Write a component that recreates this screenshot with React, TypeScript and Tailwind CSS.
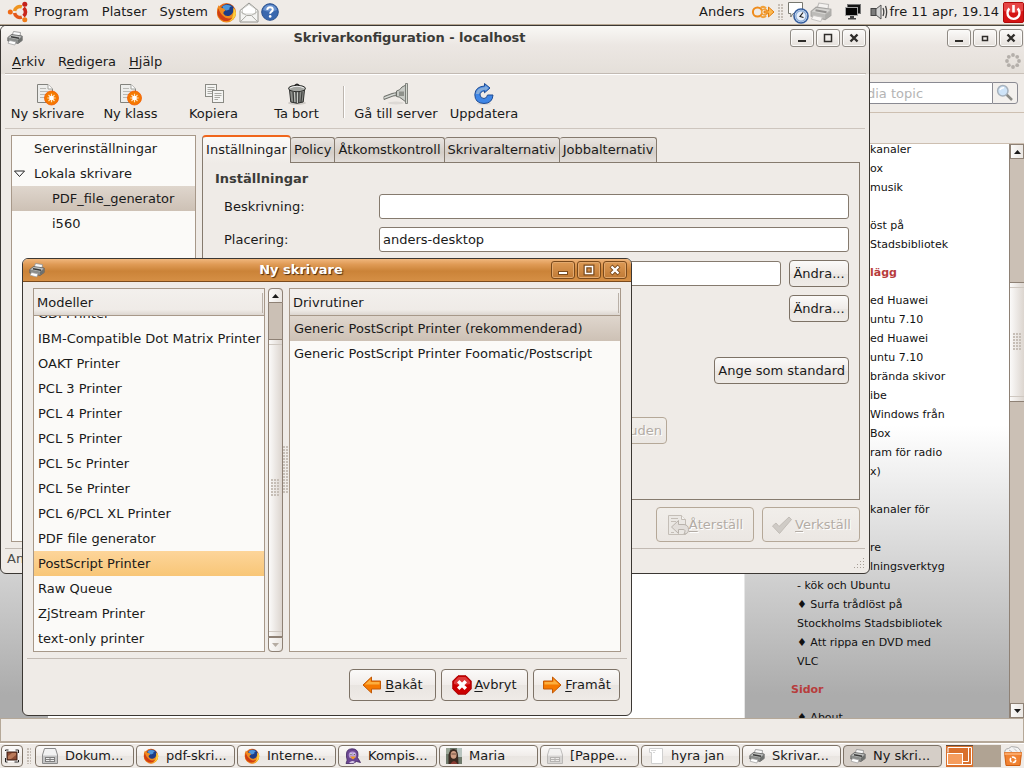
import { useState } from "react";
import type { ReactNode } from "react";

const FONT = "font-['DejaVu_Sans',sans-serif]";
const BTN =
  "border border-[#7d7266] rounded-[4px] bg-[linear-gradient(#fbfaf9,#f0ece9_50%,#e9e5e1_51%,#efebe7)] text-[#1a1a1a]";
const BTN_OFF =
  "border border-[#b5a898] rounded-[4px] bg-[linear-gradient(#f1eeea,#ebe7e3)] text-[#b3aca5] [text-shadow:1px_1px_0_#fff]";

/* ---------- icons ---------- */

function PrinterIcon({ size = 16, faded = false }: { size?: number; faded?: boolean }) {
  return (
    <svg width={size} height={size} viewBox="0 0 16 16" opacity={faded ? 0.5 : 1} className="shrink-0">
      <path d="M5 5.500 L6.500 1.500 L13.500 2.500 L13 7Z" fill="#fafafa" stroke="#8e8e8e" strokeWidth=".8" />
      <path d="M.8 7.500 L4.500 4.500 L15.200 6 L15.200 10.500 L11 13.500 L.8 11Z" fill="#8b8d8b" stroke="#5f605f" strokeWidth=".8" />
      <path d="M1.300 7.600 L4.800 5 L14.600 6.400 L10.800 9.600Z" fill="#bfc1bf" />
      <path d="M4 6.800 L12 8.200" stroke="#3a3a3a" strokeWidth="1.500" />
      <path d="M11 10 L14.800 7.200 V10.300 L11 13Z" fill="#6d6f6d" />
      <path d="M2.500 10.500 L9 11.800 L7.800 15 L1 13.200Z" fill="#fff" stroke="#9a9a9a" strokeWidth=".7" />
    </svg>
  );
}

function UbuntuIcon() {
  return (
    <svg width="22" height="22" viewBox="0 0 22 22" className="shrink-0">
      <g fill="none" strokeWidth="3.6">
        <path d="M7.580 10.040 A5.500 5.500 0 0 1 14.880 5.830" stroke="#ef9420" />
        <path d="M16.540 6.790 A5.500 5.500 0 0 1 16.540 15.210" stroke="#c9261a" />
        <path d="M14.880 16.170 A5.500 5.500 0 0 1 7.580 11.960" stroke="#e4581a" />
      </g>
      <circle cx="3.300" cy="11" r="2.500" fill="#f06a14" />
      <circle cx="17.800" cy="3.200" r="2.500" fill="#c4201a" />
      <circle cx="17.800" cy="18.800" r="2.500" fill="#ef7c18" />
    </svg>
  );
}

function FirefoxIcon({ size = 20 }: { size?: number }) {
  return (
    <svg width={size} height={size} viewBox="0 0 20 20" className="shrink-0">
      <circle cx="10" cy="10" r="9" fill="#e8681a" />
      <circle cx="11" cy="8.6" r="6.8" fill="#1d3d86" />
      <path d="M6 4 Q10 1 15 4 Q12 5 13 7 Q10 9 7 7Z" fill="#4d96dc" />
      <path d="M2.4 3.2 Q3.6 5.6 6 5.8 Q8 6 9 8.2 Q6.6 9 7 11 Q9 14.5 13 13 Q17 11.5 16.6 5.5 Q19 8 19 10.6 A9 9 0 0 1 1 10.6 Q.7 6 2.4 3.2Z" fill="#f08a1e" />
      <path d="M16.6 5.5 Q19 8 19 10.6 Q18.4 16.4 12.5 18.6 Q17.6 14 16.6 5.5Z" fill="#fbd03c" />
      <path d="M2.2 6 Q4 12 9 15 Q13 16.6 16 14.5 Q12 19.4 7 17.8 Q1.6 15.6 1.2 10Z" fill="#cf3e14" />
    </svg>
  );
}

function MailIcon() {
  return (
    <svg width="20" height="21" viewBox="0 0 20 21" className="shrink-0">
      <path d="M1 8.5 L10 1 L19 8.5 V20 H1Z" fill="#f4f4f2" stroke="#94948f" />
      <path d="M3.5 7 L10 2.4 L16.5 7 V12 H3.5Z" fill="#fff" stroke="#c6c6c2" strokeWidth=".8" />
      <path d="M1.6 19.5 L7.6 13.5 H12.4 L18.4 19.5" fill="none" stroke="#a7a7a2" />
      <path d="M1.6 9.5 L7.6 13.5 M18.4 9.5 L12.4 13.5" stroke="#b5b5b0" />
    </svg>
  );
}

function HelpIcon() {
  return (
    <svg width="18" height="18" viewBox="0 0 18 18" className="shrink-0">
      <circle cx="9" cy="9" r="8.3" fill="#3a68ae" stroke="#27508f" />
      <path d="M2 7 A7.3 7.3 0 0 1 16 7 Q9 10 2 7Z" fill="#6a93cf" />
      <path d="M6.2 6.8 Q6.4 4.2 9 4.2 Q11.8 4.2 11.8 6.6 Q11.8 8.2 10 9 Q9.2 9.5 9.2 10.8" fill="none" stroke="#fff" strokeWidth="2" />
      <circle cx="9.2" cy="13.4" r="1.3" fill="#fff" />
    </svg>
  );
}

function SwitchUserIcon() {
  return (
    <svg width="24" height="18" viewBox="0 0 24 18" className="shrink-0" fill="none">
      <circle cx="6.500" cy="9" r="4.600" stroke="#ee8b1c" strokeWidth="2" />
      <path d="M9.500 5 Q12.500 2.500 15 5.500 M9.500 13 Q12.500 15.500 15 12.500" stroke="#f2a23c" strokeWidth="2" />
      <circle cx="13.500" cy="9" r="2.800" fill="#fff" stroke="#f2a23c" strokeWidth="1.600" />
      <path d="M13 8 H17.500 V4 L23 9 L17.500 14 V10 H13Z" fill="#fcb94f" stroke="#e27c10" />
    </svg>
  );
}

function ChatClockIcon() {
  return (
    <svg width="22" height="23" viewBox="0 0 22 23" className="shrink-0">
      <path d="M1.5 1.5 H15.5 V12.5 H6 L3.8 16 V12.5 H1.5Z" fill="#fff" stroke="#77776f" />
      <circle cx="14" cy="15" r="7" fill="#fff" stroke="#365f9f" strokeWidth="1.6" />
      <circle cx="14" cy="15" r="5.2" fill="#e9f0fa" stroke="#8badd9" strokeWidth="1.4" />
      <path d="M16 11.5 L13 15.5 L16.5 16.5" fill="none" stroke="#222" strokeWidth="1.2" />
    </svg>
  );
}

function NetworkIcon() {
  return (
    <svg width="18" height="18" viewBox="0 0 18 18" className="shrink-0">
      <rect x="3.5" y="1.5" width="13" height="9" fill="#161616" stroke="#777" />
      <rect x="1.5" y="4.5" width="12" height="8" fill="#060606" stroke="#a5a5a5" />
      <path d="M6 13 H10 V15 H12 V16.5 H4 V15 H6Z" fill="#454545" />
    </svg>
  );
}

function SpeakerIcon() {
  return (
    <svg width="18" height="16" viewBox="0 0 18 16" className="shrink-0">
      <rect x="1" y="4.5" width="5" height="7" fill="#7b7b7b" stroke="#444" />
      <path d="M6 5 L11 1 V15 L6 11Z" fill="#d5d5d5" stroke="#555" />
      <path d="M13 4 Q14.6 8 13 12 M15.5 2 Q17.8 8 15.5 14" fill="none" stroke="#444" strokeWidth="1.3" />
    </svg>
  );
}

function PowerIcon() {
  return (
    <svg width="21" height="21" viewBox="0 0 21 21" className="shrink-0">
      <rect x=".5" y=".5" width="20" height="20" rx="1.5" fill="#d41414" stroke="#b00c0c" />
      <path d="M1 1 H20 V9 Q10 12 1 9Z" fill="#e64545" />
      <path d="M6.4 6.5 A6 6 0 1 0 14.6 6.5" fill="none" stroke="#fff" strokeWidth="2.4" />
      <path d="M10.5 3 V10.5" stroke="#fff" strokeWidth="2.6" />
    </svg>
  );
}

function NewDocIcon() {
  return (
    <svg width="24" height="24" viewBox="0 0 24 24">
      <path d="M1.5 2.5 H12 L16.5 7 V20.5 H1.5Z" fill="#ededeb" stroke="#82827d" />
      <path d="M12 2.5 V7 H16.5" fill="#fff" stroke="#a2a29d" />
      <path d="M4 6.5 H10 M4 9.5 H12 M4 12.5 H10 M4 15.5 H9" stroke="#b9b9b5" />
      <circle cx="15.500" cy="16" r="7" fill="#f57900" stroke="#f25c05" strokeWidth=".8" />
      <path d="M15.500 11.800 V20.200 M11.300 16 H19.700 M12.500 13 L18.500 19 M18.500 13 L12.500 19" stroke="#ffe2bd" strokeWidth="1.200" />
      <circle cx="15.500" cy="16" r="2.300" fill="#fff" />
    </svg>
  );
}

function CopyIcon() {
  return (
    <svg width="24" height="24" viewBox="0 0 24 24">
      <rect x="3.500" y="2.500" width="11" height="12" fill="#f4f4f2" stroke="#8a8a84" />
      <path d="M5.500 5.500 H12.500 M5.500 7.500 H12.500 M5.500 9.500 H11 M5.500 11.500 H10" stroke="#a9a9a4" />
      <rect x="10.500" y="8.500" width="11" height="12" fill="#f4f4f2" stroke="#8a8a84" />
      <path d="M12.500 11.500 H19.500 M12.500 13.500 H19.500 M12.500 15.500 H18 M12.500 17.500 H16" stroke="#a9a9a4" />
    </svg>
  );
}

function TrashIcon() {
  return (
    <svg width="24" height="24" viewBox="0 0 24 24">
      <ellipse cx="12" cy="21" rx="9" ry="1.800" fill="#cfcbc6" />
      <path d="M4.500 8 H19.500 L18.200 20 Q12 22.500 5.800 20Z" fill="#8b8d89" stroke="#2f302e" />
      <path d="M8 10 L8.800 20 M11 10 V21 M14 10 L13.700 21 M17 10 L16 20" stroke="#3d3e3c" strokeWidth="1.2" />
      <path d="M9.500 10 L10 20 M12.500 10 V21" stroke="#d8dad6" strokeWidth=".8" />
      <ellipse cx="12" cy="6.500" rx="8.500" ry="3.200" fill="#a4a6a2" stroke="#2f302e" />
      <path d="M5 6 Q12 2.500 19 6" fill="none" stroke="#eee" />
      <path d="M10 3.500 Q12 1 14 3.500" fill="none" stroke="#222" strokeWidth="1.500" />
    </svg>
  );
}

function ServerIcon() {
  return (
    <svg width="26" height="24" viewBox="0 0 26 24">
      <ellipse cx="13" cy="21" rx="8" ry="1.500" fill="#ddd9d5" />
      <path d="M1 14.500 L9 11.500 L14 10.500 V13.500 L10 14 L1 17.500Z" fill="#b3b6b1" stroke="#646661" strokeWidth=".9" />
      <path d="M1 16 L12 12" stroke="#e9ebe7" strokeWidth=".8" />
      <path d="M13.500 9 Q17 8.500 19 5 L23 3 V20 L19 17 Q16.500 14.500 13.500 14.500Z" fill="#c7cac5" stroke="#6c6f69" />
      <path d="M16 9.500 H21 V14 H16Z" fill="#8e918b" />
      <path d="M22.500 1.500 H24.500 V21.500 H22.500Z" fill="#d3d7cf" stroke="#6c6f69" strokeWidth=".8" />
    </svg>
  );
}

function RefreshIcon() {
  return (
    <svg width="24" height="24" viewBox="0 0 24 24">
      <ellipse cx="12" cy="21.500" rx="7" ry="1.300" fill="#ddd9d5" />
      <path d="M12.500 1.500 L18 6 L12.500 10.800 V8.800 Q8 9.500 8 13 Q8.500 16.500 12 16.500 Q15 16.300 15.500 13 H21 Q20.500 21.300 12 21.500 Q2.800 21.300 2.800 12.500 Q3.500 4.500 12.500 4Z" fill="#3f86e6" stroke="#1f4b92" />
      <path d="M3.800 12 Q4.500 5.500 13.300 5 V3.500 L16.500 6 L13.500 8.800 V7.800 Q8 8 7 12Z" fill="#86acd9" />
    </svg>
  );
}

function ArrowIcon({ right = false }: { right?: boolean }) {
  return (
    <svg width="20" height="18" viewBox="0 0 20 18" className={right ? "-scale-x-100" : ""}>
      <path d="M1 9 L9.500 1 V5 H18.500 V13 H9.500 V17Z" fill="#f57900" stroke="#c35a06" />
      <path d="M2.800 8.600 L8.600 3.200 V6 H17.500 V8.600Z" fill="#fcaf3e" />
    </svg>
  );
}

function CancelIcon() {
  return (
    <svg width="20" height="20" viewBox="0 0 20 20">
      <path d="M6 .8 H14 L19.200 6 V14 L14 19.200 H6 L.8 14 V6Z" fill="#cc0000" stroke="#a80000" />
      <path d="M6.500 2 H13.500 L18 6.500 V9 Q10 11 2 9 V6.500Z" fill="#dd3b3b" />
      <path d="M6.200 6.200 L13.800 13.800 M13.800 6.200 L6.200 13.800" stroke="#fff" strokeWidth="3.400" />
    </svg>
  );
}

function RevertIcon() {
  return (
    <svg width="22" height="22" viewBox="0 0 22 22" fill="none" stroke="#c4beb7">
      <path d="M1.500 1.500 H14.500 L18.500 5.500 V20.500 H1.500Z" fill="#ebe8e4" />
      <path d="M14.500 1.500 V5.500 H18.500" fill="#f5f3f0" />
      <path d="M4 4.500 H11 M4 7.500 H9 M4 18.500 H7" />
      <path d="M4.500 13 L11.500 6.500 V10.500 H17 Q21.500 11 21.500 15.500 Q21.500 20 17 20 Q19.500 15.500 16 15.500 H11.500 V19.500Z" fill="#e2deda" stroke="#b9b3ac" />
    </svg>
  );
}

function ApplyIcon() {
  return (
    <svg width="22" height="20" viewBox="0 0 22 20">
      <path d="M1.500 11 L5 8 L8 11.500 L18 2 L20.500 4.500 L8.500 18.500Z" fill="#cfcbc6" stroke="#c2bdb7" />
    </svg>
  );
}

function SearchIcon() {
  return (
    <svg width="18" height="18" viewBox="0 0 18 18">
      <path d="M10.500 10.500 L16 16" stroke="#8b8b86" strokeWidth="2.500" />
      <circle cx="6.800" cy="6.800" r="5.200" fill="#cfe4f8" stroke="#a7b2bd" strokeWidth="1.500" />
      <path d="M4 6 Q5 3.500 8 3.800" fill="none" stroke="#fff" strokeWidth="1.400" />
    </svg>
  );
}

function ThrobberIcon() {
  return (
    <svg width="16" height="16" viewBox="0 0 16 16" fill="#b4afaa">
      <circle cx="8" cy="2" r="1.900" />
      <circle cx="12.200" cy="3.800" r="1.900" />
      <circle cx="14" cy="8" r="1.900" />
      <circle cx="12.200" cy="12.200" r="1.900" />
      <circle cx="8" cy="14" r="1.900" />
      <circle cx="3.800" cy="12.200" r="1.900" />
      <circle cx="2" cy="8" r="1.900" />
      <circle cx="3.800" cy="3.800" r="1.900" />
    </svg>
  );
}

function DrawerIcon({ faded = false }: { faded?: boolean }) {
  return (
    <svg width="16" height="16" viewBox="0 0 16 16" opacity={faded ? 0.5 : 1} className="shrink-0">
      <path d="M2.500 .5 H13.500 L15.500 7 V15.500 H.5 V7Z" fill="#f2f2f2" stroke="#8a8a8a" />
      <path d="M1 7.500 H15 V15 H1Z" fill="#c4c4c4" />
      <rect x="3" y="9" width="10" height="5" fill="#7f7f7f" />
      <path d="M4 10.500 H7.500 M8.500 10.500 H12 M4 12.500 H7.500 M8.500 12.500 H12" stroke="#eee" />
    </svg>
  );
}

function PidginIcon() {
  return (
    <svg width="16" height="16" viewBox="0 0 16 16" className="shrink-0">
      <path d="M1.500 6 Q1.500 1 7 .8 Q13 .8 13 6.500 Q13 8.500 12.500 9.500 L15.500 14.500 L11.500 13.500 L8 15.500 H1 Q3 12 1.500 9Z" fill="#6b4692" stroke="#3e2360" strokeWidth=".8" />
      <ellipse cx="7.500" cy="7" rx="3.800" ry="3.600" fill="#b79ad6" />
      <circle cx="6" cy="6.200" r="1" fill="#fff" />
      <circle cx="9.200" cy="6.200" r="1" fill="#fff" />
      <circle cx="6" cy="6.300" r=".6" fill="#111" />
      <circle cx="9.200" cy="6.300" r=".6" fill="#111" />
      <path d="M5 8.500 L11 8.500 L8 11.500Z" fill="#f29a1e" />
      <path d="M4 15 Q7 11.500 10 14 Q8 15.300 7 15.300Z" fill="#d9cbe8" />
    </svg>
  );
}

function AvatarIcon() {
  return (
    <svg width="16" height="16" viewBox="0 0 16 16" className="shrink-0">
      <rect width="16" height="16" fill="#6f7a6c" />
      <rect x="11" width="5" height="9" fill="#b8c4bf" />
      <rect width="4" height="6" fill="#9aa596" />
      <path d="M2.500 16 V7 Q3.500 1 7.500 1 Q11.500 1 12 7 L12.500 16Z" fill="#3b2a20" />
      <ellipse cx="7.600" cy="6.800" rx="3" ry="3.900" fill="#cf9d82" />
      <path d="M5.500 6 H10" stroke="#5c4034" strokeWidth=".8" />
      <path d="M4.500 16 Q8 10 11.500 16Z" fill="#8a3b32" />
    </svg>
  );
}

function PageIcon() {
  return (
    <svg width="16" height="16" viewBox="0 0 16 16" className="shrink-0">
      <path d="M1.500 .5 H14.500 V15.500 H3.500 V4.500 H1.500Z" fill="#fff" stroke="#cfcfcf" />
      <path d="M3 2.500 H8 M5 4.500 H7" stroke="#d8d8d8" />
    </svg>
  );
}

function DesktopIcon() {
  return (
    <svg width="16" height="16" viewBox="0 0 16 16">
      <rect x="1.500" y="2" width="13" height="12" fill="#fff" stroke="#222" strokeDasharray="3 7 3 0" />
      <rect x="3" y="4" width="10" height="8" fill="#8a4b33" stroke="#3b1d12" />
      <path d="M4 8 L8 5 L12 5 V7 L7 11 H4Z" fill="#b97a5a" />
    </svg>
  );
}

function BinIcon() {
  return (
    <svg width="20" height="22" viewBox="0 0 20 22" className="shrink-0">
      <path d="M2 8 Q1 4 5.500 3.500 Q8 .5 12 2 Q17 2 18 8Z" fill="#f3f3f3" stroke="#999" strokeWidth=".8" />
      <path d="M6 5 L9 7 M11 3.500 L14 6.500" stroke="#bbb" />
      <path d="M1.500 7.500 H18.500 L17 20.500 H3Z" fill="#f08232" stroke="#cf5e10" />
      <path d="M1.500 7.500 H18.500 V10 H1.500Z" fill="#fba766" />
      <circle cx="10" cy="14.800" r="2.700" fill="none" stroke="#fff" strokeWidth="1.600" strokeDasharray="4.500 1.150" />
    </svg>
  );
}

/* ---------- shared parts ---------- */

type Glyph = "min" | "max" | "restore" | "close";

function WindowButton({ kind, active = false }: { kind: Glyph; active?: boolean }) {
  const ink = active ? "#ffffff" : "#2f2d2a";
  const names = { min: "Minimera", max: "Maximera", restore: "Återställ storlek", close: "Stäng" };
  return (
    <button
      aria-label={names[kind]}
      className={
        active
          ? "flex h-[18px] w-6 items-center justify-center rounded-[3px] border border-[#7a4a1c] bg-[linear-gradient(#dd9a55,#c07a35)] shadow-[inset_0_0_0_1px_#e2a96e]"
          : "flex h-[18px] w-6 items-center justify-center rounded-[3px] border border-[#8f8a84] bg-[linear-gradient(#fbfaf9,#e6e1dc)] shadow-[inset_0_0_0_1px_#fbfaf8]"
      }
    >
      <svg width="12" height="12" viewBox="0 0 12 12" fill="none" stroke={ink} strokeWidth="2">
        {active && kind === "max" && <rect x="2.500" y="2.500" width="7" height="7" stroke="#7a4a1c" strokeWidth="4" />}
        {active && kind === "close" && <path d="M2 2 L10 10 M10 2 L2 10" stroke="#7a4a1c" strokeWidth="4" />}
        {active && kind === "min" && <path d="M1 9 H11" stroke="#7a4a1c" strokeWidth="4" />}
        {kind === "min" && <path d="M2 9 H10" />}
        {kind === "max" && <path d="M2.500 2.500 H9.500 V9.500 H2.500Z" strokeWidth="1.500" />}
        {kind === "restore" && <path d="M3.500 4.500 H8.500 V8.500 H3.500Z" strokeWidth="1.500" />}
        {kind === "close" && <path d="M2.500 2.500 L9.500 9.500 M9.500 2.500 L2.500 9.500" strokeWidth="2.400" />}
      </svg>
    </button>
  );
}

function Mnemonic({ text }: { text: string }) {
  return (
    <span>
      <span className="underline underline-offset-2">{text[0]}</span>
      {text.slice(1)}
    </span>
  );
}

function Dots({ className }: { className: string }) {
  return (
    <div
      className={`bg-[radial-gradient(circle_at_1px_1px,#c6beb6_1px,transparent_1px)] bg-[size:3px_3px] ${className}`}
    />
  );
}

function ScrollArrow({ down = false, off = false, rounded = "" }: { down?: boolean; off?: boolean; rounded?: string }) {
  return (
    <button
      aria-label={down ? "Rulla nedåt" : "Rulla uppåt"}
      className={`flex h-[15px] shrink-0 items-center justify-center border border-[#8e8175] bg-[linear-gradient(90deg,#fbfaf9,#eae6e2)] ${rounded}`}
    >
      <svg width="7" height="4" viewBox="0 0 7 4" fill={off ? "#b5aca3" : "#1a1a1a"}>
        {down ? <path d="M0 0 H7 L3.500 4Z" /> : <path d="M0 4 H7 L3.500 0Z" />}
      </svg>
    </button>
  );
}

function Thumb({ className }: { className: string }) {
  return (
    <div
      className={`flex flex-col items-center justify-between border-x border-y border-[#8e8175] bg-[linear-gradient(90deg,#fbfaf9,#dcd5cf)] ${className}`}
    >
      <div className="h-[5px] w-full border-b border-[#cfc8c1]" />
      <Dots className="h-[18px] w-[9px]" />
      <div className="h-[5px] w-full border-t border-[#cfc8c1]" />
    </div>
  );
}

/* ---------- top panel ---------- */

function TopPanel() {
  return (
    <header className="flex h-[25px] shrink-0 items-center border-b border-[#b5a692] bg-[#efebe7] pl-[7px]">
      <UbuntuIcon />
      <nav className="flex items-center gap-[13px] pl-[5px]">
        <button>Program</button>
        <button>Platser</button>
        <button>System</button>
      </nav>
      <div className="flex items-center gap-0.5 pl-2">
        <FirefoxIcon size={21} />
        <MailIcon />
        <HelpIcon />
      </div>
      <div className="ml-auto flex items-center">
        <button>Anders</button>
        <span className="pl-1.5">
          <SwitchUserIcon />
        </span>
        <Dots className="mx-[3px] h-4 w-1.5" />
        <ChatClockIcon />
        <span className="pl-px">
          <PrinterIcon size={22} faded />
        </span>
        <span className="pl-3">
          <NetworkIcon />
        </span>
        <span className="pl-2">
          <SpeakerIcon />
        </span>
        <time className="pl-0.5">fre 11 apr, 19.14</time>
        <span className="pl-1">
          <PowerIcon />
        </span>
      </div>
    </header>
  );
}

/* ---------- browser window ---------- */

type Line = { text: string; full?: boolean };

const postsA: Line[] = [
  { text: "kanaler" },
  { text: "ox" },
  { text: "musik" },
  { text: "" },
  { text: "öst på" },
  { text: "Stadsbibliotek" },
];

const postsB: Line[] = [
  { text: "ed Huawei" },
  { text: "untu 7.10" },
  { text: "ed Huawei" },
  { text: "untu 7.10" },
  { text: "brända skivor" },
  { text: "ibe" },
  { text: "Windows från" },
  { text: "Box" },
  { text: "ram för radio" },
  { text: "x)" },
  { text: "" },
  { text: "kanaler för" },
  { text: "" },
  { text: "re" },
  { text: "lningsverktyg" },
  { text: "- kök och Ubuntu", full: true },
  { text: "♦ Surfa trådlöst på", full: true },
  { text: "Stockholms Stadsbibliotek", full: true },
  { text: "♦ Att rippa en DVD med", full: true },
  { text: "VLC", full: true },
];

function Lines({ items }: { items: Line[] }) {
  return (
    <ul>
      {items.map((l, i) => (
        <li key={i} className={l.full ? "h-[19px] whitespace-nowrap pl-[52px]" : "h-[19px] whitespace-nowrap pl-[125px]"}>
          {l.text}
        </li>
      ))}
    </ul>
  );
}

function BrowserWindow() {
  return (
    <section className="absolute inset-0 flex flex-col border-t border-[#4a463f] bg-[#efebe7]">
      <div className="bg-[linear-gradient(#f9f8f5,#ece7e3_40%,#e4dfd9)]">
        <div className="flex h-[23px] items-center justify-end gap-0.5 pr-px">
          <WindowButton kind="min" />
          <WindowButton kind="restore" />
          <WindowButton kind="close" />
        </div>
        <div className="flex h-[25px] items-center justify-end border-b border-[#c8c0b8] pr-[3px]">
          <ThrobberIcon />
        </div>
      </div>
      <div className="flex h-[39px] shrink-0 items-center justify-end border-b border-[#cdbfb1] pr-1.5">
        <input
          aria-label="Sök"
          placeholder="dia topic"
          className="h-[22px] w-[146px] border border-r-0 border-[#8a8a92] bg-white pl-5 placeholder:text-[#b4b4b4]"
        />
        <button aria-label="Sök" className="flex h-[22px] w-[26px] items-center justify-center rounded-r-[3px] border border-[#8a8a92] bg-[#f3f0ed]">
          <SearchIcon />
        </button>
      </div>
      <div className="h-[31px] shrink-0 border-b border-[#cdbfb1]" />
      <div className="flex min-h-0 flex-1">
        <div className="flex min-w-0 flex-1 bg-[linear-gradient(#fff_49%,#acacac_96%)]">
          <div className="w-12" />
          <div className="flex-1 border-r border-[#e6e6e6] bg-white" />
          <aside className="w-[264px] overflow-hidden text-[11px] leading-[19px] text-[#111]">
            <div className="-mt-1 flex flex-col gap-[9px]">
              <Lines items={postsA} />
              <h2 className="pl-[125px] font-bold text-[#b73c3c]">lägg</h2>
              <Lines items={postsB} />
              <h2 className="pl-[46px] font-bold text-[#b73c3c]">Sidor</h2>
              <Lines items={[{ text: "♦ About", full: true }]} />
            </div>
          </aside>
        </div>
        <div className="flex w-[15px] flex-col border-l border-[#8e8175] bg-[#cbc0b5]">
          <ScrollArrow />
          <div className="basis-[123px] shrink-0" />
          <Thumb className="h-[120px] shrink-0 border-x-0" />
          <div className="flex-1" />
          <ScrollArrow down />
        </div>
      </div>
      <div className="h-[25px] shrink-0 border border-b-2 border-[#b5a898]" />
    </section>
  );
}

/* ---------- printer configuration window ---------- */

function ToolButton({ label, icon, wide = false }: { label: string; icon: ReactNode; wide?: boolean }) {
  return (
    <button className={wide ? "flex w-[88px] flex-col items-center" : "flex w-[83px] flex-col items-center"}>
      <span className="flex h-6 items-center">{icon}</span>
      <span className="whitespace-nowrap leading-4">{label}</span>
    </button>
  );
}

function Field({ id, label, value }: { id: string; label: string; value: string }) {
  const [text, setText] = useState(value);
  return (
    <div className="flex items-center">
      <label htmlFor={id} className="w-[155px] shrink-0">
        {label}
      </label>
      <input
        id={id}
        value={text}
        onChange={(e) => setText(e.target.value)}
        className="h-[25px] min-w-0 flex-1 rounded-[3px] border border-[#857a6e] bg-white pl-[3px]"
      />
    </div>
  );
}

function ConfigWindow() {
  const treeRow = "flex h-[25px] items-center";
  const tab =
    "mt-0.5 flex h-[25px] items-center whitespace-nowrap rounded-t-[3px] border border-l-0 border-b-0 border-[#857a6e] bg-[linear-gradient(#e9e5e1,#d5cec7_60%,#e3deda)] px-[3px]";
  return (
    <section className="absolute bottom-[169px] left-0 right-[154px] top-0 flex flex-col rounded-[6px] border border-[#3b3733] bg-[#efebe7]">
      <div className="rounded-t-[5px] bg-[linear-gradient(#f9f8f5,#ece7e3_40%,#e4dfd9)] pl-1 pr-[3px]">
        <div className="flex h-[23px] items-center gap-0.5">
          <span className="pl-0.5">
            <PrinterIcon />
          </span>
          <h1 className="flex-1 pl-1.5 text-center font-bold text-[#3b3b38]">Skrivarkonfiguration - localhost</h1>
          <WindowButton kind="min" />
          <WindowButton kind="max" />
          <WindowButton kind="close" />
        </div>
        <nav className="flex h-[25px] items-center gap-[13px] border-b border-[#c2bab3] pl-[7px] pt-0.5">
          <button>
            <Mnemonic text="Arkiv" />
          </button>
          <button>
            R<span className="underline underline-offset-2">e</span>digera
          </button>
          <button>
            <Mnemonic text="Hjälp" />
          </button>
        </nav>
      </div>
      <div className="mx-1 flex h-[55px] shrink-0 items-center border-b border-t border-b-[#cdc5be] border-t-white pl-px">
        <ToolButton label="Ny skrivare" icon={<NewDocIcon />} />
        <ToolButton label="Ny klass" icon={<NewDocIcon />} />
        <ToolButton label="Kopiera" icon={<CopyIcon />} />
        <ToolButton label="Ta bort" icon={<TrashIcon />} />
        <div className="mx-[5px] h-8 w-0.5 border-l border-r border-l-[#bdb6af] border-r-white" />
        <div className="flex pl-0.5">
          <ToolButton label="Gå till server" icon={<ServerIcon />} wide />
          <ToolButton label="Uppdatera" icon={<RefreshIcon />} wide />
        </div>
      </div>
      <div className="flex min-h-0 flex-1 gap-[6px] pb-1.5 pl-[10px] pr-[9px] pt-1.5">
        <ul className="w-[185px] shrink-0 border border-[#a79889] bg-[#fbfaf8]">
          <li className={`${treeRow} pl-[22px]`}>Serverinställningar</li>
          <li className={`${treeRow} gap-2 pl-px`}>
            <svg width="13" height="8" viewBox="0 0 13 8" fill="#fff" stroke="#222">
              <path d="M1.500 1 H11.500 L6.500 6.500Z" />
            </svg>
            Lokala skrivare
          </li>
          <li className={`${treeRow} bg-[linear-gradient(#dfd6cd,#cdc1b5)] pl-10`}>PDF_file_generator</li>
          <li className={`${treeRow} pl-10`}>i560</li>
        </ul>
        <div className="flex min-w-0 flex-1 flex-col">
          <div className="flex h-[27px] shrink-0">
            <button className="z-10 flex h-7 w-[89px] items-center justify-center rounded-t-[4px] border border-b-0 border-t-2 border-[#857a6e] border-t-[#f0661c] bg-[linear-gradient(#fbfaf8,#efebe7)]">
              Inställningar
            </button>
            <button className={tab}>Policy</button>
            <button className={tab}>Åtkomstkontroll</button>
            <button className={tab}>Skrivaralternativ</button>
            <button className={tab}>Jobbalternativ</button>
          </div>
          <div className="flex min-h-0 flex-1 flex-col border border-[#857a6e] pl-3 pr-[10px] pt-2">
            <h2 className="font-bold leading-4 text-[#3b3b38]">Inställningar</h2>
            <div className="flex flex-col pl-[9px] pt-[7px]">
              <div className="flex flex-col gap-2">
                <Field id="desc" label="Beskrivning:" value="" />
                <Field id="place" label="Placering:" value="anders-desktop" />
                <div className="flex items-center gap-2">
                  <input
                    aria-label="Enhets-URI"
                    className="ml-[155px] h-[25px] min-w-0 flex-1 rounded-[3px] border border-[#857a6e] bg-white"
                  />
                  <button className={`${BTN} h-[27px] w-[60px]`}>Ändra...</button>
                </div>
                <div className="flex justify-end">
                  <button className={`${BTN} h-[27px] w-[60px]`}>Ändra...</button>
                </div>
              </div>
              <div className="flex justify-end pt-[35px]">
                <button className={`${BTN} h-[27px] px-[3px]`}>Ange som standard</button>
              </div>
              <div className="flex justify-end pr-[182px] pt-[33px]">
                <button disabled className={`${BTN_OFF} h-[27px] w-[160px] pr-1 text-right`}>
                  uden
                </button>
              </div>
            </div>
          </div>
          <div className="flex shrink-0 justify-end gap-2 pt-[7px]">
            <button disabled className={`${BTN_OFF} flex h-[35px] w-[98px] items-center justify-center`}>
              <RevertIcon />
              <Mnemonic text="Återställ" />
            </button>
            <button disabled className={`${BTN_OFF} flex h-[35px] w-[98px] items-center justify-center gap-0.5`}>
              <ApplyIcon />
              <Mnemonic text="Verkställ" />
            </button>
          </div>
        </div>
      </div>
      <footer className="mx-1 flex h-[25px] shrink-0 items-center justify-between border-t border-[#c2bab3] pb-1 pl-0.5 text-[#4b4b48]">
        <span>An</span>
        <svg width="12" height="12" viewBox="0 0 12 12" fill="#a79f97" className="self-end">
          <path d="M10 1h1v1h-1zM10 4h1v1h-1zM7 4h1v1h-1zM10 7h1v1h-1zM7 7h1v1h-1zM4 7h1v1h-1zM10 10h1v1h-1zM7 10h1v1h-1zM4 10h1v1h-1zM1 10h1v1h-1z" />
        </svg>
      </footer>
    </section>
  );
}

/* ---------- new printer dialog ---------- */

const models = [
  "GDI Printer",
  "IBM-Compatible Dot Matrix Printer",
  "OAKT Printer",
  "PCL 3 Printer",
  "PCL 4 Printer",
  "PCL 5 Printer",
  "PCL 5c Printer",
  "PCL 5e Printer",
  "PCL 6/PCL XL Printer",
  "PDF file generator",
  "PostScript Printer",
  "Raw Queue",
  "ZjStream Printer",
  "text-only printer",
];

const drivers = ["Generic PostScript Printer (rekommenderad)", "Generic PostScript Printer Foomatic/Postscript"];

function ListHeader({ text }: { text: string }) {
  return (
    <div className="z-10 flex h-[27px] shrink-0 items-center justify-between border-b border-[#a79889] bg-[linear-gradient(#f3f0ed,#efebe7_80%,#dcd6d0)] pl-[3px] pr-px pt-0.5">
      <span>{text}</span>
      <span className="h-5 w-px bg-[#b9b0a7]" />
    </div>
  );
}

function PrinterDialog() {
  const [model, setModel] = useState(10);
  const [driver, setDriver] = useState(0);
  const row = "flex h-[25px] w-full items-center whitespace-nowrap pl-1 text-left";
  return (
    <section className="absolute left-[22px] top-[233px] flex w-[610px] flex-col rounded-[6px] border border-[#3b3733] bg-[#efebe7]">
      <div className="flex h-[23px] items-center gap-0.5 rounded-t-[5px] border-b border-[#7a4a1c] bg-[linear-gradient(#f0b67c,#df9a55_25%,#cb8338_55%,#d58f45)] px-1">
        <span className="pl-0.5">
          <PrinterIcon />
        </span>
        <h1 className="flex-1 pl-1.5 text-center font-bold text-white [text-shadow:1px_1px_1px_#4b2c0e]">Ny skrivare</h1>
        <WindowButton kind="min" active />
        <WindowButton kind="max" active />
        <WindowButton kind="close" active />
      </div>
      <div className="flex h-[370px] px-[10px] pt-1.5">
        <div className="flex w-[232px] flex-col overflow-hidden border border-[#a79889] bg-[#fbfaf8]">
          <ListHeader text="Modeller" />
          <ul className="-mt-[15px]">
            {models.map((m, i) => (
              <li key={m}>
                <button
                  onClick={() => setModel(i)}
                  className={i === model ? `${row} bg-[linear-gradient(#fdd59a,#f8c677)]` : row}
                >
                  {m}
                </button>
              </li>
            ))}
          </ul>
        </div>
        <div className="ml-[3px] flex w-[15px] flex-col rounded-[4px] bg-[#cbc0b5]">
          <ScrollArrow rounded="rounded-t-[4px]" />
          <div className="h-9 shrink-0 border-x border-[#8e8175]" />
          <Thumb className="flex-1" />
          <ScrollArrow down off rounded="rounded-b-[4px]" />
        </div>
        <div className="flex w-[6px] items-center justify-center">
          <Dots className="h-12 w-1.5" />
        </div>
        <div className="flex flex-1 flex-col overflow-hidden border border-[#a79889] bg-[#fbfaf8]">
          <ListHeader text="Drivrutiner" />
          <ul>
            {drivers.map((d, i) => (
              <li key={d}>
                <button
                  onClick={() => setDriver(i)}
                  className={i === driver ? `${row} bg-[linear-gradient(#dfd6cd,#cdc1b5)]` : row}
                >
                  {d}
                </button>
              </li>
            ))}
          </ul>
        </div>
      </div>
      <div className="mx-1 mt-1.5 flex justify-end gap-[5px] border-t border-[#c2bab3] pb-[14px] pr-[7px] pt-[10px]">
        <button className={`${BTN} flex h-8 w-[87px] items-center justify-center gap-[3px]`}>
          <ArrowIcon />
          <Mnemonic text="Bakåt" />
        </button>
        <button className={`${BTN} flex h-8 w-[87px] items-center justify-center gap-0.5`}>
          <CancelIcon />
          <Mnemonic text="Avbryt" />
        </button>
        <button className={`${BTN} flex h-8 w-[87px] items-center justify-center gap-[3px]`}>
          <ArrowIcon right />
          <Mnemonic text="Framåt" />
        </button>
      </div>
    </section>
  );
}

/* ---------- task bar ---------- */

const tasks: { label: string; icon: ReactNode; active?: boolean }[] = [
  { label: "Dokum...", icon: <DrawerIcon /> },
  { label: "pdf-skri...", icon: <FirefoxIcon size={16} /> },
  { label: "Interne...", icon: <FirefoxIcon size={16} /> },
  { label: "Kompis...", icon: <PidginIcon /> },
  { label: "Maria", icon: <AvatarIcon /> },
  { label: "[Pappe...", icon: <DrawerIcon faded /> },
  { label: "hyra jan", icon: <PageIcon /> },
  { label: "Skrivar...", icon: <PrinterIcon /> },
  { label: "Ny skri...", icon: <PrinterIcon />, active: true },
];

function TaskBar() {
  return (
    <footer className="flex h-[25px] shrink-0 items-center border-t border-white bg-[#efebe7] pl-px pr-px">
      <button aria-label="Visa skrivbordet" className={`${BTN} flex h-[22px] w-[22px] items-center justify-center`}>
        <DesktopIcon />
      </button>
      <Dots className="mx-1 h-4 w-1" />
      <div className="flex min-w-0 flex-1 gap-0.5">
        {tasks.map((t, i) => (
          <button
            key={i}
            className={
              t.active
                ? "flex h-[22px] min-w-0 flex-1 items-center gap-[7px] whitespace-nowrap rounded-[4px] border border-[#7d7266] bg-[#d5cec7] pl-1.5"
                : `${BTN} flex h-[22px] min-w-0 flex-1 items-center gap-[7px] whitespace-nowrap pl-1.5`
            }
          >
            {t.icon}
            <span>{t.label}</span>
          </button>
        ))}
      </div>
      <svg width="55" height="22" viewBox="0 0 55 22" className="ml-1 shrink-0">
        <rect width="55" height="22" fill="#b0a393" />
        <rect width="27" height="22" fill="#d9702c" />
        <path d="M0 .5 H27" stroke="#5f4a3a" />
        <path d="M2 2.500 H25.500 V19.500 H17 M2 2.500 V7.500" fill="none" stroke="#fff" />
        <path d="M22.500 2.500 V16.500 H17" fill="none" stroke="#fff" />
        <rect x="1.500" y="8.500" width="15" height="11" fill="#f59c5d" stroke="#fff" />
      </svg>
      <span className="pl-0.5">
        <BinIcon />
      </span>
    </footer>
  );
}

export default function App() {
  return (
    <div className={`flex h-screen flex-col overflow-hidden text-[13px] leading-4 text-[#1a1a1a] ${FONT}`}>
      <TopPanel />
      <main className="relative min-h-0 flex-1 overflow-hidden">
        <BrowserWindow />
        <ConfigWindow />
        <PrinterDialog />
      </main>
      <TaskBar />
    </div>
  );
}
